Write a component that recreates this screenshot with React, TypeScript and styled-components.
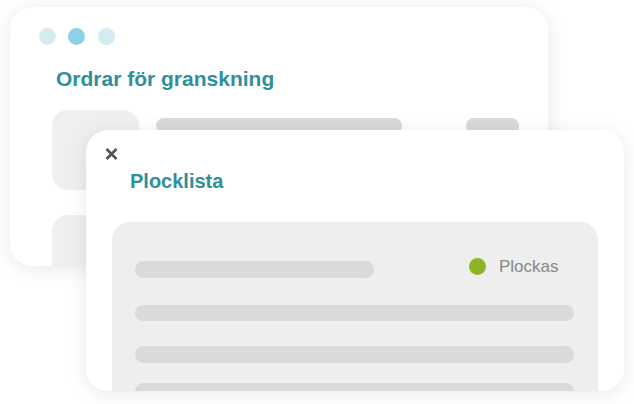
import React from "react";
import styled, { createGlobalStyle } from "styled-components";

const Global = createGlobalStyle`
  html, body { margin: 0; padding: 0; background: #ffffff; }
  body { font-family: "Liberation Sans", Arial, sans-serif; }
`;

const Stage = styled.div`
  position: relative;
  width: 634px;
  height: 404px;
  overflow: hidden;
  background: #ffffff;
  padding: 7px 0 0 10px;
  box-sizing: border-box;
`;

const Card = styled.div<{ $w: number; $h: number }>`
  width: ${(p) => p.$w}px;
  height: ${(p) => p.$h}px;
  background: #ffffff;
  border-radius: 22px;
  box-shadow: 0 3px 20px rgba(0, 0, 0, 0.09);
  overflow: hidden;
  box-sizing: border-box;
  display: flex;
  flex-direction: column;
`;

const BackCard = styled(Card)`
  padding-top: 20.5px;
`;

const FrontCard = styled(Card)`
  position: absolute;
  left: 86px;
  top: 130px;
  padding-top: 18px;
`;

const Dots = styled.div`
  display: flex;
  gap: 12.5px;
  margin-left: 28.5px;
`;

const Dot = styled.span<{ $active?: boolean }>`
  width: 17px;
  height: 17px;
  border-radius: 50%;
  background: ${(p) => (p.$active ? "#8ed0e7" : "#d5ebf2")};
`;

const Title = styled.h2<{ $ml: number; $mt: number; $size?: number }>`
  margin: ${(p) => p.$mt}px 0 0 ${(p) => p.$ml}px;
  font-family: "Liberation Sans", Arial, sans-serif;
  font-weight: 700;
  font-size: ${(p) => p.$size ?? 20}px;
  line-height: 24px;
  color: #2f8f9a;
`;

const Row = styled.div<{ $mt: number }>`
  display: flex;
  align-items: flex-start;
  margin: ${(p) => p.$mt}px 0 0 42px;
  flex-shrink: 0;
`;

const Thumb = styled.div`
  width: 87px;
  height: 80px;
  border-radius: 16px;
  background: #efefef;
  flex-shrink: 0;
`;

const Bar = styled.div<{ $w: number; $ml?: number; $mt?: number }>`
  width: ${(p) => p.$w}px;
  height: 16.7px;
  border-radius: 9px;
  background: #dadada;
  margin-left: ${(p) => p.$ml ?? 0}px;
  margin-top: ${(p) => p.$mt ?? 0}px;
  flex-shrink: 0;
`;

const Close = styled.button`
  width: 14px;
  height: 14px;
  margin-left: 18px;
  padding: 0;
  border: 0;
  background: none;
  display: flex;
  align-items: center;
  justify-content: center;
`;

const Panel = styled.div`
  margin: 29px 0 0 26px;
  width: 486px;
  flex: 1 0 auto;
  min-height: 200px;
  background: #eeeeee;
  border-radius: 18px;
  padding: 39.5px 0 0 23px;
  box-sizing: border-box;
  display: flex;
  flex-direction: column;
`;

const HeadRow = styled.div`
  display: flex;
  align-items: flex-start;
`;

const Status = styled.div`
  display: flex;
  align-items: center;
  margin-left: 95px;
  margin-top: -3.5px;
  gap: 13px;
  font-family: "Liberation Sans", Arial, sans-serif;
  font-size: 17px;
  color: #888888;
  line-height: 17px;
`;

const StatusDot = styled.span`
  width: 17px;
  height: 17px;
  border-radius: 50%;
  background: #8bb527;
  flex-shrink: 0;
`;

export default function App() {
  return (
    <>
      <Global />
      <Stage>
        <BackCard $w={538} $h={259}>
          <Dots>
            <Dot />
            <Dot $active />
            <Dot />
          </Dots>
          <Title $ml={46} $mt={22.5} $size={21}>
            Ordrar för granskning
          </Title>
          <Row $mt={19}>
            <Thumb />
            <Bar $w={246} $ml={17} $mt={7.5} />
            <Bar $w={53} $ml={64} $mt={7.5} />
          </Row>
          <Row $mt={25}>
            <Thumb />
          </Row>
        </BackCard>
        <FrontCard $w={538} $h={261}>
          <Close aria-label="Stäng">
            <svg width="13" height="12" viewBox="0 0 13 12">
              <path
                d="M1.5 1 L11.5 11 M11.5 1 L1.5 11"
                stroke="#555555"
                strokeWidth="2.7"
                strokeLinecap="butt"
              />
            </svg>
          </Close>
          <Title $ml={44} $mt={8.5}>
            Plocklista
          </Title>
          <Panel>
            <HeadRow>
              <Bar $w={239} />
              <Status>
                <StatusDot />
                Plockas
              </Status>
            </HeadRow>
            <Bar $w={439} $mt={27} />
            <Bar $w={439} $mt={25} />
            <Bar $w={439} $mt={20} />
          </Panel>
        </FrontCard>
      </Stage>
    </>
  );
}
